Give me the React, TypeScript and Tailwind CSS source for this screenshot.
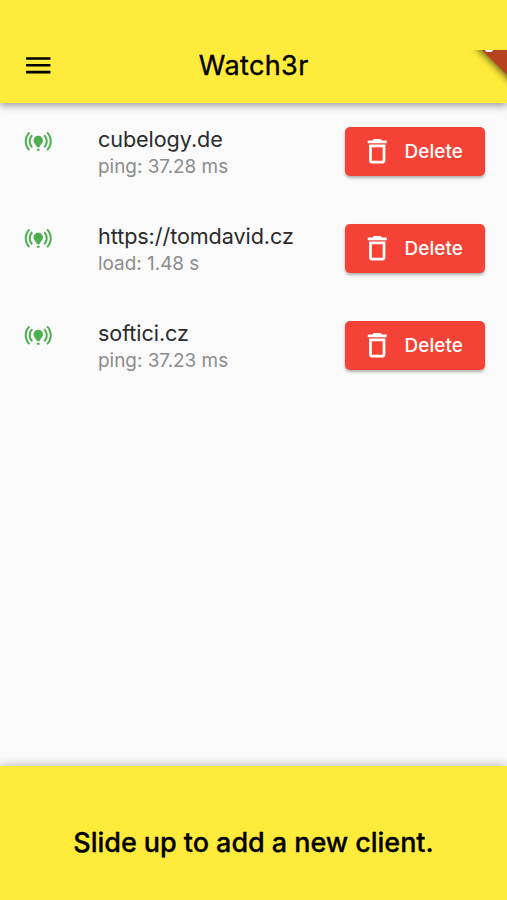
type Client = {
  host: string;
  status: string;
};

const clients: Client[] = [
  { host: "cubelogy.de", status: "ping: 37.28 ms" },
  { host: "https://tomdavid.cz", status: "load: 1.48 s" },
  { host: "softici.cz", status: "ping: 37.23 ms" },
];

const MenuIcon = () => (
  <svg viewBox="0 0 24 24" className="size-[32.5px] fill-black">
    <path d="M3 18h18v-2H3v2zm0-5h18v-2H3v2zm0-7v2h18V6H3z" />
  </svg>
);

const OnlineIcon = () => (
  <svg viewBox="0 0 24 24" className="size-[32.5px] fill-[#4caf50]">
    <path d="M15.5 11.5c0 2-2.5 3.5-2.5 5h-2c0-1.5-2.5-3-2.5-5C8.5 9.57 10.07 8 12 8s3.5 1.57 3.5 3.5zM13 17.5h-2V19h2v-1.5z" />
    <path d="M22 12c0-2.76-1.12-5.26-2.93-7.07l-1.06 1.06C19.55 7.53 20.5 9.66 20.5 12s-.95 4.47-2.49 6.01l1.06 1.06C20.88 17.26 22 14.76 22 12zM3.5 12c0-2.34.95-4.47 2.49-6.01L4.93 4.93C3.12 6.74 2 9.24 2 12s1.12 5.26 2.93 7.07l1.06-1.06C4.45 16.47 3.5 14.34 3.5 12z" />
    <path d="M17.5 12c0 1.52-.62 2.89-1.61 3.89l1.06 1.06C18.22 15.68 19 13.93 19 12s-.78-3.68-2.05-4.95l-1.06 1.06c.99 1 1.61 2.37 1.61 3.89zM7.05 16.95l1.06-1.06c-1-1-1.61-2.37-1.61-3.89s.62-2.89 1.61-3.89L7.05 7.05C5.78 8.32 5 10.07 5 12s.78 3.68 2.05 4.95z" />
  </svg>
);

const TrashIcon = () => (
  <svg viewBox="0 0 24 24" className="size-[32.5px] fill-white">
    <path d="M16 9v10H8V9h8m-1.5-6h-5l-1 1H5v2h14V4h-3.5l-1-1zM18 7H6v12c0 1.1.9 2 2 2h8c1.1 0 2-.9 2-2V7z" />
  </svg>
);

/* Corner of the debug banner, cut off by the screen edge */
const CornerRibbon = () => (
  <svg
    viewBox="0 0 40 50"
    className="absolute top-[50px] right-0 h-[50px] w-10 overflow-hidden"
  >
    <defs>
      <filter id="ribbonShadow" x="-50%" y="-50%" width="200%" height="200%">
        <feGaussianBlur stdDeviation="3" />
      </filter>
    </defs>
    <path
      d="M-9 -20L51 40V-20z"
      fill="#000"
      opacity="0.5"
      filter="url(#ribbonShadow)"
    />
    <path d="M15 0L40 25V0z" fill="#b5431f" />
    <ellipse cx="22" cy="0" rx="4" ry="2" fill="#fff" />
  </svg>
);

const ClientRow = ({ client }: { client: Client }) => (
  <li className="flex h-[97px] items-start px-[22px] pt-[22px]">
    <OnlineIcon />
    <div className="ml-[43.5px] flex-1 pt-px whitespace-nowrap">
      <p className="text-[21.6px] leading-[26px] tracking-[-0.08px] text-[#2b2b2b]">
        {client.host}
      </p>
      <p className="text-[18.9px] leading-[30px] text-[#8c8c8c]">
        {client.status}
      </p>
    </div>
    <button className="mt-[2px] flex h-[49px] w-[140px] items-center rounded-[5px] bg-[#f44336] pl-4 text-[18.9px] font-medium text-white shadow-[0_2px_3px_rgba(0,0,0,0.3)]">
      <TrashIcon />
      <span className="ml-[11px] pt-[2px] tracking-[0.1px]">Delete</span>
    </button>
  </li>
);

const App = () => {
  return (
    <div className="flex h-[900px] w-[507px] flex-col overflow-hidden bg-[#fafafa] font-['Inter',sans-serif]">
      <header className="relative z-10 flex h-[103px] items-center bg-[#ffeb3b] pt-7 shadow-[0_3px_7px_rgba(0,0,0,0.35)]">
        <button className="ml-[22px]" aria-label="Menu">
          <MenuIcon />
        </button>
        <h1 className="flex-1 pr-[54px] text-center text-[27px] leading-8 font-normal tracking-[0.4px] text-black [-webkit-text-stroke:0.35px_black]">
          Watch3r
        </h1>
        <CornerRibbon />
      </header>

      <ul className="flex-1">
        {clients.map((client) => (
          <ClientRow key={client.host} client={client} />
        ))}
      </ul>

      <footer className="flex h-[134px] items-center justify-center bg-[#ffeb3b] pt-[21px] shadow-[0_0_10px_rgba(0,0,0,0.3)]">
        <p className="text-[27px] font-medium tracking-[-0.05px] text-black [-webkit-text-stroke:0.3px_black]">
          Slide up to add a new client.
        </p>
      </footer>
    </div>
  );
};

export default App;
